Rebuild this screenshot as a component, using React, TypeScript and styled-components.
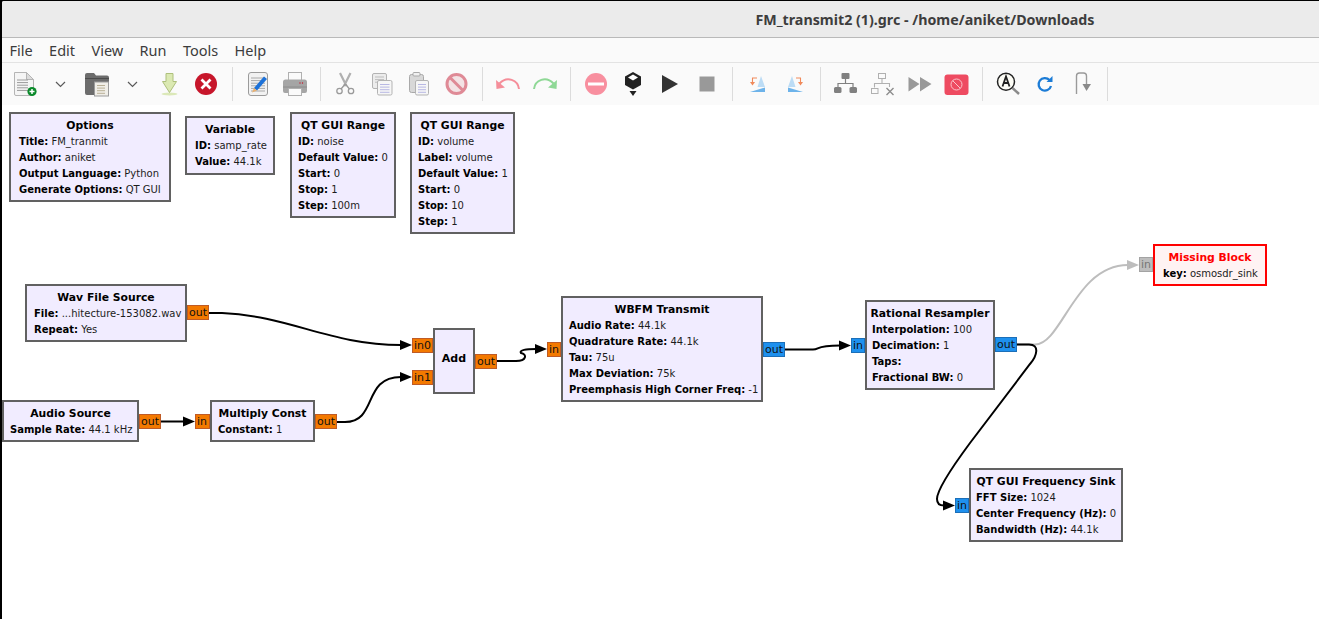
import React from 'react';
import styled, {createGlobalStyle} from "styled-components";

const CANVAS_TOP = 105

const GlobalStyle = createGlobalStyle`
  html, body {
    margin: 0;
    padding: 0;
    background: #000;
    overflow: hidden;
  }
`

const Window = styled.div`
  width: 1317px;
  height: 618px;
  margin: 1px 0 0 2px;
  background: #fff;
  display: flex;
  flex-direction: column;
  overflow: hidden;
  border-top-left-radius: 2px;
`

const TitleBar = styled.div`
  height: 37px;
  flex: none;
  box-sizing: border-box;
  background: #ebebeb;
  border-bottom: 1px solid #b9b9b9;
  display: flex;
  align-items: center;
  justify-content: flex-end;
  padding-right: 224.5px;
  font: 700 14.25px "Noto Sans", sans-serif;
  color: #3d3d3d;
`

const MenuBar = styled.div`
  height: 25px;
  flex: none;
  box-sizing: border-box;
  background: #fafafa;
  border-bottom: 1px solid #e3e3e3;
  display: flex;
  align-items: center;
  gap: 16.4px;
  padding-left: 7.5px;
  font: 400 14.5px "Noto Sans", sans-serif;
  color: #3c3c3c;
`

const Toolbar = styled.div`
  height: 42px;
  flex: none;
  background: #fafafa;
  display: flex;
  align-items: center;
  padding-left: 4.5px;
`

const ToolButton = styled.div<{$narrow?: boolean}>`
  width: ${p => p.$narrow ? 35.25 : 37}px;
  height: 42px;
  flex: none;
  display: flex;
  align-items: center;
  justify-content: center;
  svg {
    display: block;
  }
`

const ToolSep = styled.div`
  width: 14px;
  height: 34px;
  flex: none;
  position: relative;
  &::after {
    content: "";
    position: absolute;
    left: 6.5px;
    top: 0;
    bottom: 0;
    width: 1px;
    background: #dcdcdc;
  }
`

const Canvas = styled.div`
  flex: 1;
  position: relative;
  margin-left: -2px;
  background: #fff;
  font: 400 11px "DejaVu Sans", sans-serif;
  color: #000;
`

const Wires = styled.svg`
  position: absolute;
  left: 0;
  top: 0;
`

type BoxProps = {$x: number, $y: number, $w: number, $h: number}

const Block = styled.div<BoxProps & {$missing?: boolean, $pad?: number}>`
  position: absolute;
  left: ${p => p.$x}px;
  top: ${p => p.$y - CANVAS_TOP}px;
  width: ${p => p.$w}px;
  height: ${p => p.$h}px;
  box-sizing: border-box;
  border: 2px solid ${p => p.$missing ? '#ff0000' : '#616161'};
  background: ${p => p.$missing ? '#fff3f3' : '#f1ecff'};
  padding: 4px 0 0 ${p => p.$pad ?? 6}px;
  line-height: 16px;
  white-space: nowrap;
`

const BlockTitle = styled.div<{$missing?: boolean, $pad?: number}>`
  font-weight: 700;
  font-size: 10.8px;
  text-align: center;
  margin-left: -${p => p.$pad ?? 6}px;
  color: ${p => p.$missing ? '#ff0000' : '#000'};
`

const BlockLine = styled.div`
  font-size: 10px;
  color: #1c1c1c;
`

const ParamName = styled.span`
  font-weight: 700;
  color: #000;
`

const AddLabel = styled.div`
  height: 100%;
  display: flex;
  align-items: center;
  justify-content: center;
  font-weight: 700;
  margin-top: -4px;
`

const Port = styled.div<BoxProps & {$kind: 'float' | 'complex' | 'missing'}>`
  position: absolute;
  left: ${p => p.$x}px;
  top: ${p => p.$y - CANVAS_TOP}px;
  width: ${p => p.$w}px;
  height: ${p => p.$h}px;
  box-sizing: border-box;
  border: 1px solid ${p => p.$kind === 'float' ? '#bf5b26' : p.$kind === 'complex' ? '#1c6fb8' : '#a3a3a3'};
  background: ${p => p.$kind === 'float' ? '#f37900' : p.$kind === 'complex' ? '#1e90ee' : '#bdbdbd'};
  color: ${p => p.$kind === 'missing' ? '#777' : '#111'};
  line-height: 13px;
  padding-left: 1px;
  white-space: nowrap;
  overflow: hidden;
`

type Param = [string, string]

type BlockData = {
    x: number
    y: number
    w: number
    h: number
    pad: number
    title: string
    params: Array<Param>
    missing?: boolean
}

const blocks: Array<BlockData> = [
    {x: 9, y: 112, w: 162, h: 90, pad: 8, title: 'Options', params: [['Title', 'FM_tranmit'], ['Author', 'aniket'], ['Output Language', 'Python'], ['Generate Options', 'QT GUI']]},
    {x: 185, y: 116, w: 90, h: 59, pad: 8, title: 'Variable', params: [['ID', 'samp_rate'], ['Value', '44.1k']]},
    {x: 290, y: 112, w: 106, h: 106, pad: 6, title: 'QT GUI Range', params: [['ID', 'noise'], ['Default Value', '0'], ['Start', '0'], ['Stop', '1'], ['Step', '100m']]},
    {x: 410, y: 112, w: 105, h: 122, pad: 6, title: 'QT GUI Range', params: [['ID', 'volume'], ['Label', 'volume'], ['Default Value', '1'], ['Start', '0'], ['Stop', '10'], ['Step', '1']]},
    {x: 25, y: 284, w: 162, h: 58, pad: 7, title: 'Wav File Source', params: [['File', '...hitecture-153082.wav'], ['Repeat', 'Yes']]},
    {x: 2, y: 400, w: 137, h: 42, pad: 6, title: 'Audio Source', params: [['Sample Rate', '44.1 kHz']]},
    {x: 210, y: 400, w: 105, h: 42, pad: 6, title: 'Multiply Const', params: [['Constant', '1']]},
    {x: 561, y: 296, w: 202, h: 106, pad: 6, title: 'WBFM Transmit', params: [['Audio Rate', '44.1k'], ['Quadrature Rate', '44.1k'], ['Tau', '75u'], ['Max Deviation', '75k'], ['Preemphasis High Corner Freq', '-1']]},
    {x: 865, y: 300, w: 130, h: 90, pad: 5, title: 'Rational Resampler', params: [['Interpolation', '100'], ['Decimation', '1'], ['Taps', ''], ['Fractional BW', '0']]},
    {x: 969, y: 468, w: 154, h: 74, pad: 5, title: 'QT GUI Frequency Sink', params: [['FFT Size', '1024'], ['Center Frequency (Hz)', '0'], ['Bandwidth (Hz)', '44.1k']]},
    {x: 1153, y: 244, w: 114, h: 42, pad: 8, title: 'Missing Block', params: [['key', 'osmosdr_sink']], missing: true},
]

type PortData = {x: number, y: number, w: number, label: string, kind: 'float' | 'complex' | 'missing'}

const ports: Array<PortData> = [
    {x: 187, y: 305, w: 22, label: 'out', kind: 'float'},
    {x: 412, y: 338, w: 21, label: 'in0', kind: 'float'},
    {x: 412, y: 370, w: 21, label: 'in1', kind: 'float'},
    {x: 475, y: 354, w: 22, label: 'out', kind: 'float'},
    {x: 139, y: 414, w: 22, label: 'out', kind: 'float'},
    {x: 195, y: 414, w: 15, label: 'in', kind: 'float'},
    {x: 315, y: 414, w: 22, label: 'out', kind: 'float'},
    {x: 547, y: 342, w: 14, label: 'in', kind: 'float'},
    {x: 763, y: 342, w: 22, label: 'out', kind: 'complex'},
    {x: 851, y: 338, w: 14, label: 'in', kind: 'complex'},
    {x: 995, y: 337, w: 22, label: 'out', kind: 'complex'},
    {x: 955, y: 498, w: 14, label: 'in', kind: 'complex'},
    {x: 1139, y: 257, w: 14, label: 'in', kind: 'missing'},
]

const wires = [
    {d: 'M209 313 H222 C290 316 330 345 401 345', tip: [412, 345]},
    {d: 'M337 422 H345 C378 422 362 377 401 377', tip: [412, 377]},
    {d: 'M161 421.5 H184', tip: [195, 421.5]},
    {d: 'M497 361 H516 C527 361 527 354 521 353 C519 350 526 349 536 349', tip: [547, 349]},
    {d: 'M785 349.5 H813 C820 349.5 815 345.5 840 345.5', tip: [851, 345.5]},
    {d: 'M1017 344.5 H1029 C1040 344.5 1037 356 1030 364 L970 443 C950 470 937 490 937 499 C937 504 940 505.5 944 505.5', tip: [955, 505.5]},
]

const Arrow = ({tip, color}: {tip: number[], color: string}) => (
    <polygon points={`${tip[0]},${tip[1]} ${tip[0] - 12},${tip[1] - 5} ${tip[0] - 12},${tip[1] + 5}`} fill={color}/>
)

const Svg = ({children}: {children: React.ReactNode}) => (
    <svg width="30" height="30" viewBox="0 0 30 30" fill="none">{children}</svg>
)

const DocLines = ({x, y, n, w, color}: {x: number, y: number, n: number, w: number, color: string}) => (
    <>
        {Array.from({length: n}).map((_, i) => (
            <line key={i} x1={x} x2={x + w} y1={y + i * 2.6} y2={y + i * 2.6} stroke={color} strokeWidth="1"/>
        ))}
    </>
)

const NewIcon = () => (
    <Svg>
        <path d="M4.5 3.5H16.5L23.5 10.5V25a1.5 1.5 0 0 1-1.5 1.5H6a1.5 1.5 0 0 1-1.5-1.5Z" fill="#f5f5f5" stroke="#b5b5b5"/>
        <path d="M16.5 3.5V10.5H23.5Z" fill="#dcdcdc" stroke="#b5b5b5"/>
        <DocLines x={7} y={11} n={5} w={11} color="#9a9a9a"/>
        <circle cx="22" cy="22.5" r="4.6" fill="#0b8a2b"/>
        <path d="M19.5 22.5H24.5M22 20V25" stroke="#fff" strokeWidth="1.5"/>
    </Svg>
)

const Chevron = () => (
    <Svg>
        <path d="M10 13L14.5 17.5L19 13" stroke="#5a5a5a" strokeWidth="1.2"/>
    </Svg>
)

const OpenIcon = () => (
    <Svg>
        <path d="M3 6a2 2 0 0 1 2-2H12l2 2.5H25a2 2 0 0 1 2 2V24a2 2 0 0 1-2 2H5a2 2 0 0 1-2-2Z" fill="#6c6c6c"/>
        <path d="M3 9.5H27" stroke="#4c4c4c"/>
        <rect x="12.5" y="13" width="14" height="14" fill="#f0eee8" stroke="#9c9c9c"/>
        <DocLines x={15} y={16.5} n={4} w={8} color="#b9b096"/>
    </Svg>
)

const SaveIcon = () => (
    <Svg>
        <ellipse cx="14.5" cy="25" rx="8" ry="1.5" fill="#dbe8b8"/>
        <path d="M11 4.5H18V12.5H21.5L14.5 23.5L7.5 12.5H11Z" fill="#dbe9b2" stroke="#aec07c"/>
    </Svg>
)

const CloseIcon = () => (
    <Svg>
        <circle cx="14" cy="15" r="11" fill="#c7162b"/>
        <path d="M9.5 10.5L18.5 19.5M18.5 10.5L9.5 19.5" stroke="#fff" strokeWidth="2.8"/>
    </Svg>
)

const EditIcon = () => (
    <Svg>
        <rect x="5.5" y="3.5" width="19" height="23" rx="2.5" fill="#f2f2f2" stroke="#9b9b9b"/>
        <DocLines x={8} y={9} n={6} w={14} color="#a8a8a8"/>
        <path d="M11 19L21 7.5L24 10L14 21.5Z" fill="#1c71d8"/>
        <path d="M11 19L14 21.5L9 23.5Z" fill="#e8b070"/>
    </Svg>
)

const PrintIcon = () => (
    <Svg>
        <rect x="8.5" y="3.5" width="13" height="8" fill="#fafafa" stroke="#b0b0b0"/>
        <path d="M3 13a2.5 2.5 0 0 1 2.5-2.5h19A2.5 2.5 0 0 1 27 13v9a2 2 0 0 1-2 2H5a2 2 0 0 1-2-2Z" fill="#a5a5a5"/>
        <path d="M3 18H27" stroke="#8c8c8c"/>
        <circle cx="20" cy="14" r=".7" fill="#c7162b"/>
        <circle cx="22.5" cy="14" r=".7" fill="#c7162b"/>
        <rect x="8.5" y="19.5" width="13" height="7" fill="#fafafa" stroke="#b0b0b0"/>
    </Svg>
)

const CutIcon = () => (
    <Svg>
        <path d="M9 4L15.5 17M19.5 4L13 17" stroke="#b0b0b0" strokeWidth="2.2"/>
        <path d="M14.3 15L10 20M14.3 15L18.5 20" stroke="#9a9a9a" strokeWidth="1.3"/>
        <circle cx="8.5" cy="22" r="2.7" stroke="#9a9a9a" strokeWidth="1.3"/>
        <circle cx="20" cy="22" r="2.7" stroke="#9a9a9a" strokeWidth="1.3"/>
    </Svg>
)

const CopyIcon = () => (
    <Svg>
        <rect x="4.5" y="4.5" width="14" height="15" rx="1.5" fill="#ececec" stroke="#b3b3b3"/>
        <DocLines x={7} y={8} n={3} w={9} color="#bdbdbd"/>
        <rect x="9.5" y="11.5" width="14.5" height="14.5" rx="1.5" fill="#f6f6f6" stroke="#b3b3b3"/>
        <DocLines x={12} y={15.5} n={4} w={9.5} color="#b8b8e4"/>
    </Svg>
)

const PasteIcon = () => (
    <Svg>
        <rect x="4.5" y="5.5" width="14" height="18" rx="2" fill="#d8d8d8" stroke="#a9a9a9"/>
        <rect x="8" y="3.5" width="7" height="3.5" rx="1" fill="#f0f0f0" stroke="#a9a9a9"/>
        <rect x="10.5" y="11.5" width="13" height="14.5" rx="1.5" fill="#f6f6f6" stroke="#b3b3b3"/>
        <DocLines x={13} y={15.5} n={4} w={8} color="#b8b8e4"/>
    </Svg>
)

const DeleteIcon = () => (
    <Svg>
        <circle cx="14.5" cy="15" r="9.5" fill="#f3e3e5" stroke="#df8a96" strokeWidth="3"/>
        <path d="M8 8.5L21 21.5" stroke="#df8a96" strokeWidth="3"/>
    </Svg>
)

const UndoIcon = () => (
    <Svg>
        <path d="M26 20C25 11 14 6.5 6.5 14.5" stroke="#f58e9a" strokeWidth="2"/>
        <path d="M3 11L3.5 20L12 18.5Z" fill="#f58e9a"/>
    </Svg>
)

const RedoIcon = () => (
    <Svg>
        <path d="M4 20C5 11 16 6.5 23.5 14.5" stroke="#8fd896" strokeWidth="2"/>
        <path d="M27 11L26.5 20L18 18.5Z" fill="#8fd896"/>
    </Svg>
)

const DisableIcon = () => (
    <Svg>
        <circle cx="15" cy="15" r="11" fill="#f88f9f"/>
        <rect x="7" y="13.5" width="16" height="3" fill="#fff"/>
    </Svg>
)

const BypassIcon = () => (
    <Svg>
        <path d="M15 3L23 7.5V16L15 20.5L7 16V7.5Z" fill="#222"/>
        <path d="M15 5.5L20 8.5L15 11.5L10 8.5Z" fill="#fff"/>
        <path d="M11.5 22H18.5L15 27Z" fill="#222"/>
    </Svg>
)

const PlayIcon = () => (
    <Svg>
        <path d="M7 6L23 15L7 24Z" fill="#333"/>
    </Svg>
)

const StopIcon = () => (
    <Svg>
        <rect x="7.5" y="7.5" width="15" height="15" fill="#999"/>
    </Svg>
)

const RotateLeftIcon = () => (
    <Svg>
        <path d="M18 7L22 18H14.5Z" fill="#bcdcf5"/>
        <path d="M7 23L22 18.5V23Z" fill="#6db3ea"/>
        <path d="M14 9H9.5V14" stroke="#f0895a" strokeWidth="1.1"/>
        <path d="M7 13H12L9.5 16.5Z" fill="#f0895a"/>
    </Svg>
)

const RotateRightIcon = () => (
    <Svg>
        <path d="M12 7L8 18H15.5Z" fill="#bcdcf5"/>
        <path d="M23 23L8 18.5V23Z" fill="#6db3ea"/>
        <path d="M16 9H20.5V14" stroke="#f0895a" strokeWidth="1.1"/>
        <path d="M23 13H18L20.5 16.5Z" fill="#f0895a"/>
    </Svg>
)

const TreeIcon = () => (
    <Svg>
        <rect x="10.5" y="4" width="8" height="6" rx="1" fill="#808080"/>
        <path d="M14.5 10V14.5M7 18V14.5H22V18" stroke="#808080" strokeWidth="1.2"/>
        <rect x="3" y="18" width="7.5" height="6" rx="1.5" fill="#808080"/>
        <rect x="18.5" y="18" width="7.5" height="6" rx="1.5" fill="#808080"/>
    </Svg>
)

const TreeOffIcon = () => (
    <Svg>
        <rect x="10.5" y="4.5" width="7" height="5" fill="#fafafa" stroke="#b0b0b0"/>
        <path d="M14 9.5V14.5M6.5 18.5V14.5H21.5V18" stroke="#b0b0b0" strokeWidth="1.1"/>
        <rect x="3.5" y="19.5" width="6.5" height="5" fill="#fafafa" stroke="#b0b0b0"/>
        <path d="M18.5 19L25.5 26M25.5 19L18.5 26" stroke="#8c8c8c" strokeWidth="1.4"/>
    </Svg>
)

const ForwardIcon = () => (
    <Svg>
        <path d="M3.5 8L14.5 15L3.5 22.5ZM15 8L26.5 15L15 22.5Z" fill="#999"/>
    </Svg>
)

const BlockedIcon = () => (
    <Svg>
        <rect x="2.5" y="5.5" width="24" height="20.5" rx="3" fill="#ee4b61"/>
        <circle cx="14.5" cy="15.5" r="5.5" stroke="#fbc5cc" strokeWidth="1"/>
        <path d="M10.7 11.7L18.3 19.3" stroke="#fbc5cc"/>
    </Svg>
)

const FindIcon = () => (
    <Svg>
        <circle cx="13" cy="12.7" r="8.5" fill="#fdfdf6" stroke="#222" strokeWidth="1.5"/>
        <path d="M9.5 17.5L13 7.5L16.5 17.5M10.5 14H15.5" stroke="#222" strokeWidth="1.8"/>
        <path d="M19.5 19L26 25" stroke="#8a8a8a" strokeWidth="2.4"/>
    </Svg>
)

const ReloadIcon = () => (
    <Svg>
        <path d="M19.5 11A6.3 6.3 0 1 0 21 17" stroke="#1c7cd6" strokeWidth="2.3"/>
        <path d="M22.5 7V13H16.5Z" fill="#1c7cd6"/>
    </Svg>
)

const StepIcon = () => (
    <Svg>
        <path d="M9.5 25V7a3 3 0 0 1 3-3h4a3 3 0 0 1 3 3V15" stroke="#9a9a9a" strokeWidth="1.4"/>
        <path d="M15.5 15H24L19.5 22Z" fill="#8a8a8a"/>
    </Svg>
)

const toolbar = [
    [NewIcon, Chevron, OpenIcon, Chevron, SaveIcon, CloseIcon],
    [EditIcon, PrintIcon],
    [CutIcon, CopyIcon, PasteIcon, DeleteIcon],
    [UndoIcon, RedoIcon],
    [DisableIcon, BypassIcon, PlayIcon, StopIcon],
    [RotateLeftIcon, RotateRightIcon],
    [TreeIcon, TreeOffIcon, ForwardIcon, BlockedIcon],
    [FindIcon, ReloadIcon, StepIcon],
]

const App = () => {
    return (
        <Window>
            <GlobalStyle/>
            <TitleBar>FM_transmit2 (1).grc - /home/aniket/Downloads</TitleBar>
            <MenuBar>
                {['File', 'Edit', 'View', 'Run', 'Tools', 'Help'].map(m => <span key={m}>{m}</span>)}
            </MenuBar>
            <Toolbar>
                {toolbar.map((group, g) => (
                    <React.Fragment key={g}>
                        {group.map((Icon, i) => <ToolButton key={i} $narrow={Icon === Chevron}><Icon/></ToolButton>)}
                        <ToolSep/>
                    </React.Fragment>
                ))}
            </Toolbar>
            <Canvas>
                <Wires width="1319" height="514" viewBox={`0 ${CANVAS_TOP} 1319 514`} fill="none">
                    <path d="M1017 344.5 H1035 C1062 344.5 1075 265 1128 265" stroke="#bdbdbd" strokeWidth="2"/>
                    <Arrow tip={[1139, 265]} color="#bdbdbd"/>
                    {wires.map((w, i) => (
                        <g key={i}>
                            <path d={w.d} stroke="#000" strokeWidth="2"/>
                            <Arrow tip={w.tip} color="#000"/>
                        </g>
                    ))}
                </Wires>
                {blocks.map(b => (
                    <Block key={b.title + b.x} $x={b.x} $y={b.y} $w={b.w} $h={b.h} $pad={b.pad} $missing={b.missing}>
                        <BlockTitle $missing={b.missing} $pad={b.pad}>{b.title}</BlockTitle>
                        {b.params.map(([name, value]) => (
                            <BlockLine key={name}><ParamName>{name}:</ParamName> {value}</BlockLine>
                        ))}
                    </Block>
                ))}
                <Block $x={433} $y={328} $w={42} $h={66} $pad={0}><AddLabel>Add</AddLabel></Block>
                {ports.map(p => (
                    <Port key={p.x + '-' + p.y} $x={p.x} $y={p.y} $w={p.w} $h={15} $kind={p.kind}>{p.label}</Port>
                ))}
            </Canvas>
        </Window>
    );
};

export default App;
